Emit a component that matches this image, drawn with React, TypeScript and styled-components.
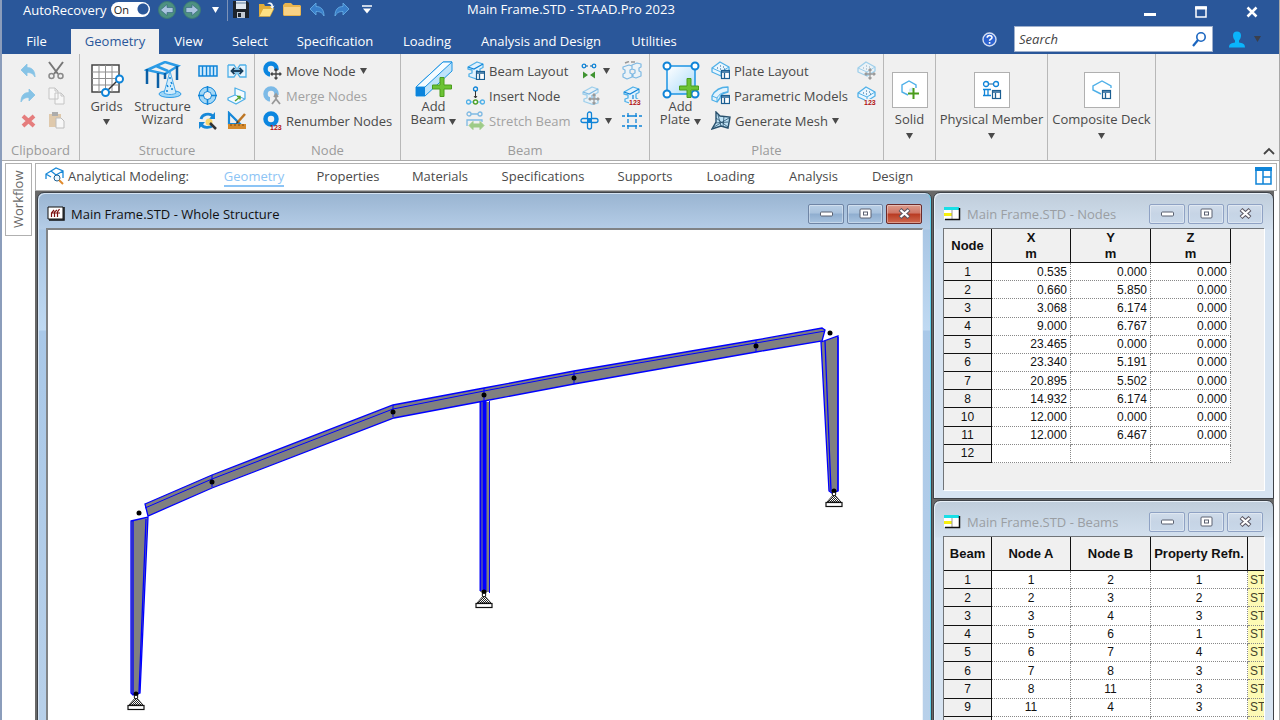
import React from 'react';
import styled, { createGlobalStyle, css } from 'styled-components';

const ui = `"Open Sans", "Noto Sans", sans-serif`;
const sheet = `"Liberation Sans", Arial, sans-serif`;
const B = '#0f84d8';
const L = '#4fb0e8';
const N = '#1c5f92';
const K = '#4a4a4a';

const Global = createGlobalStyle`
  * { box-sizing: border-box; }
  html, body { margin: 0; background: #fff; overflow: hidden; }
  body { font: 13px/16px ${ui}; color: #4a4a4a; }
  button, input { font: inherit; color: inherit; padding: 0; margin: 0; border: 0; background: none; }
  svg { display: block; flex: none; }
`;

const Page = styled.div`
  height: 100vh;
  display: flex;
  flex-direction: column;
  overflow: hidden;
  border-left: 2px solid #8b9dbb;
  border-right: 1px solid #a8a8a8;
`;

/* ---------- title bar ---------- */
const Header = styled.header`
  background: #2a579a;
  color: #fff;
`;
const TitleRow = styled.div`
  display: grid;
  grid-template-columns: 465px auto 1fr;
  height: 26px;
`;
const Quick = styled.div`
  display: flex;
  align-items: center;
  height: 19px;
  padding-left: 21px;
`;
const Toggle = styled.label`
  display: flex;
  align-items: center;
  gap: 4px;
  height: 19px;
  white-space: nowrap;
  margin-right: 5px;
  input {
    appearance: none;
    width: 39px;
    height: 15px;
    border-radius: 8px;
    background: radial-gradient(circle at 32px 7px, #2a579a 5px, #fff 6px);
  }
`;
const ToggleWrap = styled.span`
  position: relative;
  display: flex;
`;
const ToggleState = styled.span`
  position: absolute;
  left: 3px;
  top: 1px;
  font: 11px/13px ${ui};
  color: #222;
`;
const QuickBtn = styled.button<{ $w?: number }>`
  width: ${p => p.$w ?? 25}px;
  height: 19px;
  display: grid;
  place-items: center;
  flex: none;
`;
const Divider = styled.i`
  width: 1px;
  height: 22px;
  background: #7d93b8;
  flex: none;
`;
const Title = styled.h1`
  margin: 0;
  font: 13px/19px ${ui};
  white-space: nowrap;
`;
const Controls = styled.div`
  display: flex;
  justify-content: flex-end;
  padding-right: 2px;
`;
const ControlBtn = styled.button`
  width: 51px;
  height: 24px;
  display: grid;
  place-items: center;
`;
const TabRow = styled.div`
  display: flex;
  height: 28px;
`;
const Tabs = styled.nav`
  display: flex;
  align-items: flex-end;
  flex: 1;
`;
const Tab = styled.button<{ $w: number; $on?: boolean }>`
  width: ${p => p.$w}px;
  height: 25px;
  line-height: 22px;
  padding-bottom: 2px;
  white-space: nowrap;
  ${p => p.$on && css`background: #f0f0f0; color: #2a579a;`}
`;
const HelpBtn = styled.button`
  width: 20px;
  height: 26px;
  display: grid;
  place-items: center;
`;
const SearchBox = styled.label`
  display: flex;
  align-items: center;
  width: 199px;
  height: 26px;
  margin: 0 16px 0 15px;
  padding: 0 5px 0 4px;
  background: #fff;
  border: 1px solid #9fb0cc;
  input {
    flex: 1;
    min-width: 0;
    font-style: italic;
    color: #444;
    outline: 0;
  }
  input::placeholder { color: #444; opacity: 1; }
`;
const Account = styled.button`
  display: flex;
  align-items: center;
  gap: 9px;
  height: 26px;
  width: 50px;
`;

/* ---------- ribbon ---------- */
const Ribbon = styled.section`
  display: flex;
  height: 107px;
  background: #f0f0f0;
  border-bottom: 1px solid #ababab;
`;
const Group = styled.div<{ $w: number }>`
  width: ${p => p.$w}px;
  flex: none;
  display: flex;
  flex-direction: column;
  border-right: 1px solid #b8b8b8;
`;
const GroupBody = styled.div<{ $pad?: number }>`
  display: flex;
  height: 80px;
  padding: 4px 0 0 ${p => p.$pad ?? 0}px;
`;
const GroupName = styled.div`
  height: 26px;
  line-height: 32px;
  text-align: center;
  color: #9b9b9b;
`;
const Column = styled.div<{ $w: number }>`
  width: ${p => p.$w}px;
  display: grid;
  grid-auto-rows: 25px;
`;
const Tool = styled.button<{ $off?: boolean }>`
  display: flex;
  align-items: center;
  justify-content: center;
  gap: 6px;
  svg { opacity: ${p => (p.$off ? 0.5 : 1)}; }
`;
const StartTool = styled(Tool)`
  justify-content: flex-start;
  padding-left: 3px;
`;
const Command = styled.button<{ $off?: boolean }>`
  display: flex;
  align-items: center;
  gap: 4px;
  white-space: nowrap;
  color: ${p => (p.$off ? '#a2a2a2' : '#4a4a4a')};
  svg:first-child { opacity: ${p => (p.$off ? 0.5 : 1)}; }
`;
const Big = styled.button<{ $w: number }>`
  width: ${p => p.$w}px;
  display: flex;
  flex-direction: column;
  align-items: center;
  line-height: 13px;
  padding-top: 3px;
  white-space: nowrap;
  flex: none;
`;
const BigText = styled.span`
  display: block;
  margin-top: 1px;
`;
const WithCaret = styled.span`
  display: flex;
  align-items: flex-end;
  justify-content: center;
  gap: 4px;
  svg { margin-bottom: 1px; }
`;
const CaretRow = styled.span`
  display: flex;
  justify-content: center;
  padding-top: 6px;
`;
const Gallery = styled.button<{ $w: number }>`
  width: ${p => p.$w}px;
  flex: none;
  display: flex;
  flex-direction: column;
  align-items: center;
  padding-top: 18px;
  border-right: 1px solid #b8b8b8;
  white-space: nowrap;
`;
const GalleryIcon = styled.span`
  width: 36px;
  height: 36px;
  display: grid;
  place-items: center;
  background: #fff;
  border: 1px solid #b0b0b0;
  margin-bottom: 3px;
`;
const RibbonEnd = styled.div`
  flex: 1;
  display: flex;
  justify-content: flex-end;
  align-items: flex-end;
  padding: 0 4px 5px 0;
`;

/* ---------- workspace ---------- */
const Body = styled.main`
  flex: 1;
  min-height: 0;
  display: flex;
  gap: 3px;
  padding: 2px 2px 0 3px;
`;
const Side = styled.button`
  width: 27px;
  height: 73px;
  border: 1px solid #b0b0b0;
  background: #fff;
  writing-mode: vertical-rl;
  transform: rotate(180deg);
  color: #666;
  line-height: 25px;
`;
const Work = styled.div`
  flex: 1;
  min-width: 0;
  display: flex;
  flex-direction: column;
`;
const DocBar = styled.nav`
  display: flex;
  align-items: center;
  height: 28px;
  flex: none;
  padding: 0 4px 3px 9px;
  border: 1px solid #b0b0b0;
`;
const DocLabel = styled.span`
  display: flex;
  align-items: center;
  gap: 3px;
  width: 162px;
  white-space: nowrap;
`;
const DocTab = styled.a<{ $w: number; $on?: boolean }>`
  width: ${p => p.$w}px;
  text-align: center;
  text-decoration: none;
  color: ${p => (p.$on ? '#8cc4f5' : '#4a4a4a')};
  span {
    display: inline-block;
    height: 22px;
    line-height: 18px;
    padding-top: 2px;
    border-bottom: 2px solid ${p => (p.$on ? '#8cc4f5' : 'transparent')};
  }
`;
const Spacer = styled.div`flex: 1;`;
const Mdi = styled.div`
  flex: 1;
  min-height: 0;
  overflow: hidden;
  display: grid;
  grid-template-columns: minmax(0, 1fr) 341px;
  grid-template-rows: minmax(560px, 1fr);
  gap: 1px;
  margin-right: 3px;
  padding: 1px 0 0 2px;
  background: #686868;
`;
const Stack = styled.div`
  display: grid;
  grid-template-rows: 307px minmax(252px, 1fr);
  gap: 1px;
`;
const Frame = styled.section<{ $on?: boolean }>`
  display: flex;
  flex-direction: column;
  min-width: 0;
  border: 1px solid #3e4248;
  border-radius: 7px 7px 0 0;
  padding: 0 ${p => (p.$on ? 8 : 9)}px 8px;
  background: ${p =>
    p.$on
      ? 'linear-gradient(#99b4d1, #b5cde7 36px, #a9c6e4 37px, #bfd9f2 137px, #a9c8e8 138px, #b9d1ea)'
      : 'linear-gradient(#bfcddb, #d3e0ee 36px, #d7e4f2 37px)'};
  box-shadow: inset 1px 1px 0 ${p => (p.$on ? '#d5e3f2, inset -1px 0 0 #5fd0ec' : '#e8f0f8')};
`;
const FrameTitle = styled.div<{ $on?: boolean }>`
  height: 35px;
  display: flex;
  align-items: center;
  gap: 6px;
  padding: 6px 1px 0 1px;
  color: ${p => (p.$on ? '#111' : '#9a9ea3')};
  white-space: nowrap;
  h2 {
    flex: 1;
    margin: 0;
    font: inherit;
  }
`;
const FrameBtn = styled.button<{ $kind: 'active' | 'idle' | 'close' }>`
  width: 36px;
  height: 20px;
  display: grid;
  place-items: center;
  margin-left: -3px;
  border-radius: 2px;
  border: 1px solid ${p => (p.$kind === 'close' ? '#6b2a2a' : p.$kind === 'active' ? '#6f85a5' : '#8fa2c4')};
  box-shadow: inset 0 0 0 1px rgba(255, 255, 255, 0.35);
  background: ${p =>
    p.$kind === 'close'
      ? 'linear-gradient(#dc9c8c, #cf7566 45%, #b83a22 50%, #cf6a50)'
      : p.$kind === 'active'
      ? 'linear-gradient(#b9cfe6, #a9c2dd 45%, #8fadcf 50%, #a8c3df)'
      : 'linear-gradient(#d0dcea, #c6d4e5 50%, #c9d8e9)'};
`;
const Canvas = styled.div`
  flex: 1;
  min-height: 0;
  overflow: hidden;
  background: #fff;
  border: solid #808386;
  border-width: 2px 1px 1px 2px;
  border-right-color: #eef3f8;
`;
const Sheet = styled.div`
  flex: 1;
  min-height: 0;
  overflow: hidden;
  background: #f0f0f0;
  border: solid #707478;
  border-width: 1px 0 0 1px;
  box-shadow: 1px 1px 0 #fff;
`;
const Grid = styled.table<{ $w: number; $h: number }>`
  width: ${p => p.$w}px;
  height: ${p => p.$h}px;
  table-layout: fixed;
  border-collapse: separate;
  border-spacing: 0;
  font: 12px/14px ${sheet};
  color: #111;
  th, td { padding: 0; white-space: nowrap; overflow: hidden; }
  thead th {
    height: 34px;
    font: bold 13px/16px ${sheet};
    border-right: 1px solid #111;
    border-bottom: 1px solid #111;
    background: #f0f0f0;
  }
  tbody th {
    height: 15px;
    font-weight: normal;
    background: #f0f0f0;
    border-right: 1px solid #111;
    border-bottom: 1px solid #111;
  }
  tbody td {
    background: #fff;
    border-right: 1px dotted #888;
    border-bottom: 1px dotted #888;
  }
`;
const Num = styled.td`
  && { padding-right: 3px; }
  text-align: right;
`;
const Mid = styled.td`
  text-align: center;
`;
const Mat = styled.td`
  && { background: #fdfab4; padding-left: 2px; color: #45432a; }
`;

/* ---------- icons ---------- */
type P = { w: number; h: number; children: React.ReactNode };
const Svg = ({ w, h, children }: P) => (
  <svg width={w} height={h} viewBox={`0 0 ${w} ${h}`} fill="none" aria-hidden="true">{children}</svg>
);
const Caret = ({ c = K }: { c?: string }) => (
  <Svg w={7} h={6}><path d="M0 0h7L3.500 6z" fill={c} /></Svg>
);
const Plus = ({ x, y }: { x: number; y: number }) => (
  <path transform={`translate(${x} ${y})`} d="M8 .5h4V8h7.500v4H12v7.500H8V12H.5V8H8z" fill="#6cc335" stroke="#4a9c1c" />
);
const Panel = ({ x, y }: { x: number; y: number }) => (
  <g transform={`translate(${x} ${y})`}>
    <rect x=".5" y=".5" width="8" height="8" fill="#fff" stroke={N} strokeWidth="1.200" />
    <path d="M0 2h9M3.500 3v6" stroke={N} strokeWidth="1.300" />
  </g>
);
const Num123 = ({ x, y }: { x: number; y: number }) => (
  <text x={x} y={y} fontFamily="Liberation Sans, sans-serif" fontSize="7" fontWeight="bold" fill="#b01010">123</text>
);
const Move = ({ x, y }: { x: number; y: number }) => (
  <path transform={`translate(${x} ${y})`} d="M5 0v10M0 5h10M3.500 1.500L5 0l1.500 1.500M3.500 8.500L5 10l1.500-1.500M1.500 3.500L0 5l1.500 1.500M8.500 3.500L10 5 8.500 6.500" stroke="#444" strokeWidth="1.300" />
);
const IBeam = () => (
  <>
    <path d="M2 6l9-5 6 2v3.500l-3 1.500v4l3 2v3l-5 1.500-9-3V13l3-1V9L2 8z" fill="#e1f2fd" stroke={L} strokeWidth="1.300" strokeLinejoin="round" />
    <path d="M2 6l6 2 9-5M11 9v4" stroke={B} strokeWidth="1.200" />
  </>
);
const Slab = () => (
  <>
    <path d="M1 7l8-6 9 5v4l-8 5-9-4z" fill="#eaf6fe" stroke={L} strokeWidth="1.300" strokeLinejoin="round" />
    <path d="M1 7l9 4 8-5M10 11v4" stroke={L} />
    <path d="M6 7h1M9 5h1M12 6h1M9 8h1M13 8h1" stroke={N} />
  </>
);
const Ring = () => <circle cx="8" cy="8" r="5.500" stroke="#0b86e0" strokeWidth="4.500" />;
const NodeCut = () => <path d="M7 9h12v10H7z" fill="#f0f0f0" />;

const CurveArrow = ({ flip, c, s }: { flip?: boolean; c: string; s?: string }) => (
  <Svg w={16} h={16}>
    <path transform={flip ? 'translate(16 0) scale(-1 1)' : undefined} d="M1 7l6-6v3.500c5 0 8 3 8 9.500-2-3.500-4-4.500-8-4.500V13z" fill={c} stroke={s ?? c} strokeWidth=".8" strokeLinejoin="round" />
  </Svg>
);
const RoundArrow = ({ flip }: { flip?: boolean }) => (
  <Svg w={18} h={18}>
    <circle cx="9" cy="9" r="8.500" fill="#4d9180" stroke="#3c7a78" />
    <path transform={flip ? 'translate(18 0) scale(-1 1)' : undefined} d="M2.500 9L9 3.500v3h6v5H9v3z" fill="#a9c4de" stroke="#2f5f7a" strokeWidth=".6" />
  </Svg>
);
const SaveIcon = () => (
  <Svg w={18} h={19}>
    <path d="M1 1h14l2 2v15H1z" fill="#1d232b" />
    <path d="M4 1h10v8H4z" fill="#dfe7ef" />
    <path d="M4 2h10v2H4z" fill="#9fb2c6" />
    <path d="M5 12h8v6H5z" fill="#c4cbd3" />
    <path d="M6 13h3v4H6z" fill="#1d232b" />
  </Svg>
);
const OpenIcon = () => (
  <Svg w={18} h={17}>
    <path d="M1 15V3h5l1 2h7v4" fill="#e3ad38" />
    <path d="M1 15.500L5 7.500h11l-4 8z" fill="#fde184" stroke="#d9a22e" strokeWidth=".6" />
    <path d="M9 3c3-3 6-1 6 2l1.500-.5L14.500 8 12 5.500h1.500C13 3 11 2.500 9 3z" fill="#f3f7fb" />
  </Svg>
);
const FolderIcon = () => (
  <Svg w={18} h={16}>
    <path d="M0 13V3l2-2h6l2 2h7l1 1v9l-1 1H1z" fill="#e9b44e" />
    <path d="M1 5h16v8H1z" fill="#f8d286" />
  </Svg>
);
const CutIcon = () => (
  <Svg w={18} h={19}>
    <path d="M2 1l9 12M16 1L7 13" stroke="#777" strokeWidth="2" />
    <circle cx="4.500" cy="15" r="2.500" stroke="#8a8a8a" strokeWidth="1.500" />
    <circle cx="13.500" cy="15" r="2.500" stroke="#8a8a8a" strokeWidth="1.500" />
  </Svg>
);
const CopyIcon = () => (
  <Svg w={17} h={18}>
    <path d="M1 1h6l3 3v8H1zM7 6h6l3 3v8H7z" fill="#fff" stroke="#9a9a9a" />
    <path d="M7 1v3h3M13 6v3h3" stroke="#9a9a9a" />
  </Svg>
);
const CrossIcon = () => (
  <Svg w={15} h={14}><path d="M2 2l11 10M13 2L2 12" stroke="#e57d7d" strokeWidth="4" /></Svg>
);
const PasteIcon = () => (
  <Svg w={17} h={17}>
    <path d="M1 2h12v13H1z" fill="#d0a46a" />
    <path d="M4 0h6v4H4z" fill="#6a6a6a" />
    <path d="M8 6h5l3 3v7H8z" fill="#fff" stroke="#8a8a8a" />
  </Svg>
);
const GridsIcon = () => (
  <Svg w={34} h={38}>
    <rect x="2" y="4" width="27" height="27" fill="#fff" stroke="#444" strokeWidth="1.500" />
    <path d="M9 4v27M15.500 4v27M22 4v27M2 11h27M2 17.500h27M2 24h27" stroke="#8f8f8f" />
    <path d="M16 31l13-13" stroke="#333" strokeWidth="1.500" />
    <circle cx="15.500" cy="31.500" r="3.500" fill="#fff" stroke={B} strokeWidth="2" />
    <circle cx="29.500" cy="18" r="3.500" fill="#fff" stroke={B} strokeWidth="2" />
  </Svg>
);
const WizardIcon = () => (
  <Svg w={38} h={38}>
    <path d="M3 9L21 1l13 4-13 8zM12 5l12 5" fill="none" stroke="#2b9be6" strokeWidth="2.500" />
    <path d="M3 8v15M14 12v15M33 5v14M21 12v6" stroke="#0b5fa5" strokeWidth="2.500" />
    <ellipse cx="26" cy="33" rx="11" ry="3.500" fill="#9fd6f7" stroke="#2b9be6" />
    <path d="M26 10l6 22c-3 2-9 2-12 0z" fill="#d3ecfb" stroke="#2b9be6" strokeWidth=".8" />
    <path d="M26 16v2M27 21l1 2M23 24l1 2M27 28h2M22 30h2M26 25h1" stroke="#0f84d8" strokeWidth="1.500" />
  </Svg>
);
const AddBeamIcon = () => (
  <Svg w={38} h={38}>
    <path d="M1 26L28 1h9v9L10 35H1z" fill="#bfe3fa" stroke="#1c94e4" />
    <path d="M1 26L28 1h9L10 26z" fill="#f4fbff" stroke="#1c94e4" />
    <path d="M1 26h9v9H1z" fill="#0b84dc" />
    <Plus x={17} y={16} />
  </Svg>
);
const AddPlateIcon = () => (
  <Svg w={38} h={38}>
    <defs>
      <linearGradient id="plate" x1="0" y1="0" x2="1" y2="1">
        <stop offset="0" stopColor="#fff" /><stop offset="1" stopColor="#a9dafa" />
      </linearGradient>
    </defs>
    <rect x="5" y="5" width="28" height="28" fill="url(#plate)" stroke="#1c94e4" strokeWidth="1.500" />
    {[[5, 5], [33, 5], [5, 33], [33, 33]].map(([x, y]) => (
      <circle key={`${x}-${y}`} cx={x} cy={y} r="3.500" fill="#fff" stroke={B} strokeWidth="2" />
    ))}
    <Plus x={17} y={17} />
  </Svg>
);

const StripIcon = () => (
  <Svg w={20} h={12}>
    <rect x="1" y="1" width="18" height="10" fill="#d3ecfd" stroke={B} strokeWidth="1.500" />
    <path d="M4.500 1v10M8.500 1v10M12 1v10M15.500 1v10" stroke={B} strokeWidth="1.400" />
  </Svg>
);
const SpanIcon = () => (
  <Svg w={20} h={16}>
    <path d="M1 2h6l2 3v6l-2 3H1V2M19 2h-6l-2 3v6l2 3h6V2" fill="#e8f5fe" stroke={L} strokeWidth="1.300" />
    <path d="M5 8h10M7.500 5L4.500 8l3 3M12.500 5l3 3-3 3" stroke="#1b3f5c" strokeWidth="1.800" />
  </Svg>
);
const WheelIcon = () => (
  <Svg w={19} h={19}>
    <circle cx="9.500" cy="9.500" r="6.500" stroke="#a5d8f6" strokeWidth="5" />
    <circle cx="9.500" cy="9.500" r="8.500" stroke={B} />
    <circle cx="9.500" cy="9.500" r="4" fill="#f0f0f0" stroke={B} />
    <path d="M9.500 0v6M9.500 13v6M0 9.500h6M13 9.500h6" stroke={B} strokeWidth="1.500" />
  </Svg>
);
const FoldIcon = () => (
  <Svg w={19} h={18}>
    <path d="M8 1l10 4v7l-9 5-8-4v-2l7-3z" fill="#f4fbff" stroke={L} strokeWidth="1.300" strokeLinejoin="round" />
    <path d="M8 8l10 4" stroke={L} />
    <path d="M8 14l5-4M10 9.500h3v3" stroke="#4fa028" strokeWidth="1.400" />
  </Svg>
);
const RefreshIcon = () => (
  <Svg w={19} h={19}>
    <path d="M3 8a7 6 0 0 1 12-3M15 14a7 6 0 0 1-12-1" stroke="#1788d8" strokeWidth="2.800" />
    <path d="M17 1v7h-6zM1 18v-7h6z" fill="#1788d8" />
    <circle cx="11" cy="11" r="3.500" fill="#f8d56a" />
    <path d="M12 12l6 6" stroke="#333" strokeWidth="2.500" />
  </Svg>
);
const DraftIcon = () => (
  <Svg w={20} h={19}>
    <path d="M2 2l11 11H2z" stroke="#1788d8" strokeWidth="2.200" />
    <path d="M1 13h18v5H1z" fill="#d58a2c" />
    <path d="M4 13v2M8 13v2M12 13v2M16 13v2" stroke="#7a4710" />
    <path d="M10 12l8-9" stroke="#bd7624" strokeWidth="2.500" />
    <path d="M9 13l1-3 2 1z" fill="#333" />
  </Svg>
);
const MoveNodeIcon = () => <Svg w={19} h={19}><Ring /><NodeCut /><Move x={8} y={8} /></Svg>;
const MergeNodeIcon = () => (
  <Svg w={19} h={19}><Ring /><NodeCut /><path d="M13 9v4l-4 5M13 13l4 5M11 11l2-3 2 3" stroke="#444" strokeWidth="1.800" /></Svg>
);
const RenumNodeIcon = () => <Svg w={19} h={19}><Ring /><Num123 x={7} y={19} /></Svg>;
const BeamLayoutIcon = () => <Svg w={19} h={19}><IBeam /><Panel x={10} y={10} /></Svg>;
const InsertNodeIcon = () => (
  <Svg w={19} h={19}>
    <circle cx="9.500" cy="3" r="2" stroke={B} strokeWidth="1.300" />
    <path d="M9.500 5v7M8 10l1.500 2 1.500-2" stroke="#333" />
    <path d="M4 16h3M12 16h3" stroke={L} />
    <circle cx="2.500" cy="16" r="2" stroke={L} strokeWidth="1.300" />
    <circle cx="16.500" cy="16" r="2" stroke={L} strokeWidth="1.300" />
    <circle cx="9.500" cy="16" r="2" fill="#fff" stroke="#4fa028" strokeWidth="1.400" />
  </Svg>
);
const StretchIcon = () => (
  <Svg w={19} h={19}>
    <circle cx="3" cy="3" r="2" stroke={B} strokeWidth="1.300" />
    <circle cx="14" cy="3" r="2" stroke={B} strokeWidth="1.300" />
    <path d="M5 3h7M1 15V9h15v2" stroke={B} strokeWidth="1.300" />
    <path d="M3 14.500l4-4V13h7v-2.500l4 4-4 4V16H7v2.500z" fill="#4fa820" stroke="#4fa820" />
  </Svg>
);
const CompressIcon = () => (
  <Svg w={16} h={16}>
    <circle cx="3" cy="3" r="1.800" stroke={B} strokeWidth="1.300" />
    <circle cx="13" cy="3" r="1.800" stroke={B} strokeWidth="1.300" />
    <path d="M5 3h2M9 3h2" stroke={N} />
    <path d="M2 8.500L7 12l-5 3.500zM14 8.500L9 12l5 3.500z" fill="#3f9330" />
  </Svg>
);
const BeamMoveIcon = () => <Svg w={19} h={19}><IBeam /><Move x={8} y={8} /></Svg>;
const CrossingIcon = () => (
  <Svg w={19} h={19}>
    <path d="M7.500 7V3a2 2 0 0 1 4 0v4M7.500 12v4a2 2 0 0 0 4 0v-4M7 7.500H3a2 2 0 0 0 0 4h4M12 7.500h4a2 2 0 0 1 0 4h-4" stroke={B} strokeWidth="1.300" />
    <path d="M7 7h5v5H7z" fill={B} />
  </Svg>
);
const BeamPairIcon = () => (
  <Svg w={20} h={19}>
    <path d="M1 6l6-2 3 1v3l-2 1v3l2 1v3l-5 2-4-2v-3l2-1V9L1 8zM10 4l5-2 4 1v3l-2 1v3l2 1v4l-5 2-3-1v-3l2-1V9l-3-1z" fill="#eaf6fe" stroke={B} strokeWidth="1.200" strokeLinejoin="round" />
    <path d="M3 2l4-1.500M9 1h4" stroke="#444" strokeWidth="1.500" />
  </Svg>
);
const BeamNumIcon = () => <Svg w={19} h={19}><IBeam /><path d="M7 13h12v6H7z" fill="#f0f0f0" /><Num123 x={7} y={19} /></Svg>;
const AxisIcon = () => (
  <Svg w={20} h={16}>
    <path d="M0 3h3M5 3h10M17 3h3M0 13h3M5 13h10M17 13h3" stroke={B} strokeWidth="1.400" />
    <path d="M6 0v16M14 0v16" stroke={B} strokeWidth="1.300" strokeDasharray="4 2" />
  </Svg>
);
const PlateLayoutIcon = () => <Svg w={19} h={19}><Slab /><Panel x={10} y={9} /></Svg>;
const ParametricIcon = () => (
  <Svg w={19} h={19}>
    <path d="M1 10C4 4 10 1 17 1v5c-5 1-8 3-8 6l-3 4-5-2z" fill="#e4f3fd" stroke={L} strokeWidth="1.300" strokeLinejoin="round" />
    <path d="M1 10l5 2c2-4 6-6 11-6M6 12v4" stroke={L} />
    <Panel x={10} y={9} />
  </Svg>
);
const MeshIcon = () => (
  <Svg w={20} h={19}>
    <path d="M5 1l4 4 10 1-2 11-7-2-9 3 4-7z" fill="#bfe2f5" stroke="#28506c" strokeWidth="1.400" />
    <path d="M7 4l3 11M13 5l-1 11M4 12l13-1M5 7l12 9M18 7L3 16" stroke="#28506c" strokeWidth=".8" />
  </Svg>
);
const PlateMoveIcon = () => <Svg w={19} h={19}><Slab /><Move x={8} y={8} /></Svg>;
const PlateNumIcon = () => <Svg w={19} h={19}><Slab /><path d="M8 13h11v6H8z" fill="#f0f0f0" /><Num123 x={7} y={19} /></Svg>;
const SolidIcon = () => (
  <Svg w={20} h={20}>
    <path d="M8 15l-6-3V5l7-4 7 4v3" stroke={L} strokeWidth="1.400" />
    <path d="M9 9l4-2v4l-4 1z" fill="#d6edfb" />
    <path d="M13.500 8v11M8 13.500h11" stroke="#4a9c1c" strokeWidth="2" />
  </Svg>
);
const MemberIcon = () => (
  <Svg w={20} h={20}>
    <circle cx="4" cy="4" r="2.500" stroke={B} strokeWidth="1.300" />
    <circle cx="14" cy="4" r="2.500" stroke={B} strokeWidth="1.300" />
    <path d="M7 4h4" stroke={N} />
    <path d="M1 9.500h8M1 15.500h8M2.500 10v5M6 10v5" stroke={B} strokeWidth="1.300" />
    <Panel x={10} y={10} />
  </Svg>
);
const DeckIcon = () => (
  <Svg w={20} h={20}>
    <path d="M9 14l-8-4V6l9-5 9 5v2" stroke={L} strokeWidth="1.400" />
    <Panel x={10} y={10} />
  </Svg>
);
const ModelIcon = () => (
  <Svg w={20} h={18}>
    <path d="M1 12V7l5-3 5-3 7 3v7M6 4l5 4 7-4M11 8v3M1 7l5 3" stroke="#1788d8" strokeWidth="1.300" />
    <circle cx="12" cy="11" r="3" fill="#eaf6fe" stroke={N} />
    <path d="M14 13l4 4" stroke="#e08a2c" strokeWidth="2" />
  </Svg>
);
const LayoutIcon = () => (
  <Svg w={17} h={18}>
    <path d="M1 1h15v16H1zM8 4v13M8 10h8" stroke={B} strokeWidth="1.500" />
    <path d="M0 0h17v4H0z" fill={B} />
  </Svg>
);
const HelpIcon = () => (
  <Svg w={15} h={15}>
    <circle cx="7.500" cy="7.500" r="6.500" fill="#2c62cf" stroke="#d3def2" strokeWidth="1.400" />
    <path d="M5.200 5.800c0-3 4.800-3 4.800-.3 0 1.500-2.400 1.600-2.400 3.200M7.600 10v1.800" stroke="#fff" strokeWidth="1.600" />
  </Svg>
);
const FrameAppIcon = () => (
  <Svg w={18} h={15}>
    <path d="M1 1h15v12H1z" fill="#fff" stroke="#111" />
    <path d="M17 1v13H2" stroke="#111" strokeWidth="1.500" />
    <path d="M4.500 11V7l2.500-3M7.500 11V6l2.500-2M10.500 11V6l2-3M4 7h9" stroke="#7c1010" strokeWidth="1.200" />
  </Svg>
);
const TableAppIcon = () => (
  <Svg w={17} h={14}>
    <path d="M0 1h15v11H0z" fill="#fff" />
    <path d="M0 0h15v3H0z" fill="#19dfe6" />
    <path d="M0 6h8v3H0z" fill="#f7f010" />
    <path d="M8 3v9" stroke="#999" />
    <path d="M15.500 1v11.500H1" stroke="#111" strokeWidth="1.500" />
  </Svg>
);

const MinGlyph = () => (
  <Svg w={13} h={6}><rect x=".5" y="1" width="12" height="4" rx="1" fill="#fff" stroke="#5a6070" /></Svg>
);
const MaxGlyph = () => (
  <Svg w={13} h={11}>
    <rect x="1" y="1" width="11" height="9" rx="1" fill="#fff" stroke="#5a6070" />
    <rect x="4.500" y="4" width="4" height="3" stroke="#5a6070" />
  </Svg>
);
const CloseGlyph = () => (
  <Svg w={13} h={11}>
    <path d="M2 1.500l9 8M11 1.500l-9 8" stroke="#5a5560" strokeWidth="4.200" />
    <path d="M2.500 2l8 7M10.500 2l-8 7" stroke="#fff" strokeWidth="2.200" />
  </Svg>
);

/* ---------- data ---------- */
const tabs: [string, number][] = [
  ['File', 69], ['Geometry', 88], ['View', 59], ['Select', 64], ['Specification', 106],
  ['Loading', 78], ['Analysis and Design', 150], ['Utilities', 76],
];
const docTabs: [string, number][] = [
  ['Geometry', 94], ['Properties', 94], ['Materials', 90], ['Specifications', 116],
  ['Supports', 88], ['Loading', 83], ['Analysis', 83], ['Design', 75],
];
const nodes: [number, string, string, string][] = [
  [1, '0.535', '0.000', '0.000'], [2, '0.660', '5.850', '0.000'], [3, '3.068', '6.174', '0.000'],
  [4, '9.000', '6.767', '0.000'], [5, '23.465', '0.000', '0.000'], [6, '23.340', '5.191', '0.000'],
  [7, '20.895', '5.502', '0.000'], [8, '14.932', '6.174', '0.000'], [10, '12.000', '0.000', '0.000'],
  [11, '12.000', '6.467', '0.000'], [12, '', '', ''],
];
const beams: [number, number, number, number][] = [
  [1, 1, 2, 1], [2, 2, 3, 2], [3, 3, 4, 3], [4, 5, 6, 1], [5, 6, 7, 4],
  [6, 7, 8, 3], [7, 8, 11, 3], [9, 11, 4, 3],
];
const joints = [[139, 513], [212, 482], [393, 412], [484, 395], [574, 378], [756, 346], [830, 333]];
const supports = [[136, 694], [484, 592], [834, 491]];

const FrameButtons = ({ on }: { on?: boolean }) => (
  <>
    <FrameBtn $kind={on ? 'active' : 'idle'} aria-label="Minimize"><MinGlyph /></FrameBtn>
    <FrameBtn $kind={on ? 'active' : 'idle'} aria-label="Maximize"><MaxGlyph /></FrameBtn>
    <FrameBtn $kind={on ? 'close' : 'idle'} aria-label="Close"><CloseGlyph /></FrameBtn>
  </>
);

const Structure = () => (
  <svg width="874" height="490" viewBox="48 230 874 490" fill="none" role="img" aria-label="Whole structure">
    <defs>
      <pattern id="hatch" width="2" height="2" patternUnits="userSpaceOnUse">
        <path d="M0 0h1v1H0zM1 1h1v1H1z" fill="#222" />
      </pattern>
    </defs>
    <g stroke="#00f" strokeWidth="1.300">
      <path d="M145 504L212 475 393 405 484 388 574 371 756 340 822 328 825 330 822 341 756 352 574 384 484 401 394 418 212 488 148 516z" fill="#808080" />
      <path d="M145 508L212 479 393 409 484 391 574 374 756 343 825 331" strokeWidth="1" />
      <path d="M212 475v12M393 405v12M484 388v13M574 371v13M756 340v12" strokeWidth="1" />
      <path d="M131 521l17-4-8 176-7 2-2-2z" fill="#808080" />
      <path d="M133 520v175M146 519l-7 174" />
      <path d="M821 342l17-6v155l-6 2-3-2z" fill="#808080" />
      <path d="M825 341l6 150M838 337v154" />
      <path d="M480 402h10v190h-10z" fill="#808080" stroke="none" />
      <path d="M480.500 401v190" strokeWidth="2" />
      <path d="M484.500 401v190" strokeWidth="4" />
      <path d="M489.500 401v192" strokeWidth="1" />
    </g>
    {joints.map(([x, y]) => <circle key={`${x}`} cx={x} cy={y} r="2.500" fill="#000" />)}
    {supports.map(([x, y]) => (
      <g key={`${x}`} transform={`translate(${x} ${y})`} stroke="#111">
        <circle r="2.500" fill="#000" stroke="none" />
        <path d="M0 3l7 8H-7z" fill="url(#hatch)" strokeWidth=".8" />
        <circle cy="3" r="1.800" fill="#fff" />
        <rect x="-8" y="11.500" width="16" height="4" fill="#fff" strokeWidth="1.200" />
      </g>
    ))}
  </svg>
);

export default function App() {
  return (
    <Page>
      <Global />
      <Header>
        <TitleRow>
          <Quick>
            <Toggle>
              AutoRecovery
              <ToggleWrap>
                <input type="checkbox" role="switch" defaultChecked />
                <ToggleState>On</ToggleState>
              </ToggleWrap>
            </Toggle>
            <QuickBtn aria-label="Back"><RoundArrow /></QuickBtn>
            <QuickBtn aria-label="Forward"><RoundArrow flip /></QuickBtn>
            <QuickBtn $w={22} aria-label="History"><Caret c="#fff" /></QuickBtn>
            <Divider />
            <QuickBtn $w={27} aria-label="Save"><SaveIcon /></QuickBtn>
            <QuickBtn aria-label="Open"><OpenIcon /></QuickBtn>
            <QuickBtn aria-label="Folder"><FolderIcon /></QuickBtn>
            <QuickBtn aria-label="Undo"><CurveArrow c="#3a7fca" s="#6bb4ea" /></QuickBtn>
            <QuickBtn aria-label="Redo"><CurveArrow flip c="#3a7fca" s="#6bb4ea" /></QuickBtn>
            <QuickBtn aria-label="Customize">
              <Svg w={10} h={9}><path d="M0 1h10" stroke="#fff" strokeWidth="1.500" /><path d="M1 3.500h8L5 8.500z" fill="#fff" /></Svg>
            </QuickBtn>
          </Quick>
          <Title>Main Frame.STD - STAAD.Pro 2023</Title>
          <Controls>
            <ControlBtn aria-label="Minimize"><Svg w={12} h={12}><path d="M0 8.500h12" stroke="#fff" strokeWidth="3" /></Svg></ControlBtn>
            <ControlBtn aria-label="Maximize"><Svg w={12} h={12}><path d="M1 1h10v10H1z" stroke="#fff" strokeWidth="1.500" /><path d="M0 2h12" stroke="#fff" strokeWidth="3" /></Svg></ControlBtn>
            <ControlBtn aria-label="Close"><Svg w={12} h={12}><path d="M1.500 1.500l9 9M10.500 1.500l-9 9" stroke="#fff" strokeWidth="2.500" /></Svg></ControlBtn>
          </Controls>
        </TitleRow>
        <TabRow>
          <Tabs>
            {tabs.map(([t, w]) => <Tab key={t} $w={w} $on={t === 'Geometry'}>{t}</Tab>)}
          </Tabs>
          <HelpBtn aria-label="Help"><HelpIcon /></HelpBtn>
          <SearchBox>
            <input type="text" placeholder="Search" aria-label="Search" />
            <Svg w={15} h={16}><circle cx="9" cy="6" r="4.200" stroke="#1b66c0" strokeWidth="1.600" /><path d="M6 9l-5 6" stroke="#1b66c0" strokeWidth="2.200" /></Svg>
          </SearchBox>
          <Account aria-label="Account">
            <Svg w={16} h={17}><path d="M4 4.500C4 2 5.500.5 8 .5s4 1.500 4 4c0 2-1 4-2 5v2c3 .5 6 1 6 5H0c0-4 3-4.500 6-5v-2c-1-1-2-3-2-5z" fill="#0ab4fb" /></Svg>
            <Caret c="#3a3f4c" />
          </Account>
        </TabRow>
      </Header>

      <Ribbon>
        <Group $w={78}>
          <GroupBody $pad={12}>
            <Column $w={28}>
              <Tool $off aria-label="Undo"><CurveArrow c="#1f98dd" /></Tool>
              <Tool $off aria-label="Redo"><CurveArrow flip c="#1f98dd" /></Tool>
              <Tool aria-label="Delete"><CrossIcon /></Tool>
            </Column>
            <Column $w={28}>
              <Tool aria-label="Cut"><CutIcon /></Tool>
              <Tool $off aria-label="Copy"><CopyIcon /></Tool>
              <Tool $off aria-label="Paste"><PasteIcon /></Tool>
            </Column>
          </GroupBody>
          <GroupName>Clipboard</GroupName>
        </Group>
        <Group $w={175}>
          <GroupBody $pad={1}>
            <Big $w={51}>
              <GridsIcon />
              <BigText>Grids<CaretRow><Caret /></CaretRow></BigText>
            </Big>
            <Big $w={61}><WizardIcon /><BigText>Structure<br />Wizard</BigText></Big>
            <Column $w={29}>
              <Tool aria-label="Divisions"><StripIcon /></Tool>
              <Tool aria-label="Circular repeat"><WheelIcon /></Tool>
              <Tool aria-label="Rotate"><RefreshIcon /></Tool>
            </Column>
            <Column $w={29}>
              <Tool aria-label="Span"><SpanIcon /></Tool>
              <Tool aria-label="Mirror"><FoldIcon /></Tool>
              <Tool aria-label="Drafting"><DraftIcon /></Tool>
            </Column>
          </GroupBody>
          <GroupName>Structure</GroupName>
        </Group>
        <Group $w={146}>
          <GroupBody $pad={8}>
            <Column $w={136}>
              <Command><MoveNodeIcon />Move Node<Caret /></Command>
              <Command $off><MergeNodeIcon />Merge Nodes</Command>
              <Command><RenumNodeIcon />Renumber Nodes</Command>
            </Column>
          </GroupBody>
          <GroupName>Node</GroupName>
        </Group>
        <Group $w={249}>
          <GroupBody>
            <Big $w={65}><AddBeamIcon /><BigText>Add<WithCaret>Beam<Caret /></WithCaret></BigText></Big>
            <Column $w={112}>
              <Command><BeamLayoutIcon />Beam Layout</Command>
              <Command><InsertNodeIcon />Insert Node</Command>
              <Command $off><StretchIcon />Stretch Beam</Command>
            </Column>
            <Column $w={36}>
              <StartTool aria-label="Merge beams"><CompressIcon /><Caret /></StartTool>
              <StartTool $off aria-label="Move beam"><BeamMoveIcon /></StartTool>
              <Tool aria-label="Intersect"><CrossingIcon /><Caret /></Tool>
            </Column>
            <Column $w={35}>
              <Tool $off aria-label="Break beams"><BeamPairIcon /></Tool>
              <Tool aria-label="Renumber beams"><BeamNumIcon /></Tool>
              <Tool aria-label="Axes"><AxisIcon /></Tool>
            </Column>
          </GroupBody>
          <GroupName>Beam</GroupName>
        </Group>
        <Group $w={234}>
          <GroupBody>
            <Big $w={61}><AddPlateIcon /><BigText>Add<WithCaret>Plate<Caret /></WithCaret></BigText></Big>
            <Column $w={140}>
              <Command><PlateLayoutIcon />Plate Layout</Command>
              <Command><ParametricIcon />Parametric Models</Command>
              <Command><MeshIcon />Generate Mesh<Caret /></Command>
            </Column>
            <Column $w={30}>
              <Tool $off aria-label="Move plate"><PlateMoveIcon /></Tool>
              <Tool aria-label="Renumber plates"><PlateNumIcon /></Tool>
            </Column>
          </GroupBody>
          <GroupName>Plate</GroupName>
        </Group>
        <Gallery $w={52}><GalleryIcon><SolidIcon /></GalleryIcon>Solid<CaretRow><Caret /></CaretRow></Gallery>
        <Gallery $w={112}><GalleryIcon><MemberIcon /></GalleryIcon>Physical Member<CaretRow><Caret /></CaretRow></Gallery>
        <Gallery $w={108}><GalleryIcon><DeckIcon /></GalleryIcon>Composite Deck<CaretRow><Caret /></CaretRow></Gallery>
        <RibbonEnd>
          <button aria-label="Collapse ribbon"><Svg w={12} h={8}><path d="M1 7l5-5 5 5" stroke="#444" strokeWidth="1.800" /></Svg></button>
        </RibbonEnd>
      </Ribbon>

      <Body>
        <Side>Workflow</Side>
        <Work>
          <DocBar>
            <DocLabel><ModelIcon />Analytical Modeling:</DocLabel>
            {docTabs.map(([t, w]) => <DocTab key={t} href="#" $w={w} $on={t === 'Geometry'}><span>{t}</span></DocTab>)}
            <Spacer />
            <button aria-label="Window layout"><LayoutIcon /></button>
          </DocBar>
          <Mdi>
            <Frame $on>
              <FrameTitle $on>
                <FrameAppIcon />
                <h2>Main Frame.STD - Whole Structure</h2>
                <FrameButtons on />
              </FrameTitle>
              <Canvas><Structure /></Canvas>
            </Frame>
            <Stack>
              <Frame>
                <FrameTitle>
                  <TableAppIcon />
                  <h2>Main Frame.STD - Nodes</h2>
                  <FrameButtons />
                </FrameTitle>
                <Sheet>
                  <Grid $w={287} $h={234}>
                    <colgroup><col width="48" /><col width="79" /><col width="80" /><col width="80" /></colgroup>
                    <thead><tr><th>Node</th><th>X<br />m</th><th>Y<br />m</th><th>Z<br />m</th></tr></thead>
                    <tbody>
                      {nodes.map(([n, x, y, z]) => (
                        <tr key={n}><th scope="row">{n}</th><Num>{x}</Num><Num>{y}</Num><Num>{z}</Num></tr>
                      ))}
                    </tbody>
                  </Grid>
                </Sheet>
              </Frame>
              <Frame>
                <FrameTitle>
                  <TableAppIcon />
                  <h2>Main Frame.STD - Beams</h2>
                  <FrameButtons />
                </FrameTitle>
                <Sheet>
                  <Grid $w={404} $h={198}>
                    <colgroup><col width="48" /><col width="79" /><col width="80" /><col width="97" /><col width="100" /></colgroup>
                    <thead><tr><th>Beam</th><th>Node A</th><th>Node B</th><th>Property Refn.</th><th /></tr></thead>
                    <tbody>
                      {beams.map(([n, a, b, r]) => (
                        <tr key={n}><th scope="row">{n}</th><Mid>{a}</Mid><Mid>{b}</Mid><Mid>{r}</Mid><Mat>STEEL</Mat></tr>
                      ))}
                      <tr><th /><td /><td /><td /><Mat /></tr>
                    </tbody>
                  </Grid>
                </Sheet>
              </Frame>
            </Stack>
          </Mdi>
        </Work>
      </Body>
    </Page>
  );
}
